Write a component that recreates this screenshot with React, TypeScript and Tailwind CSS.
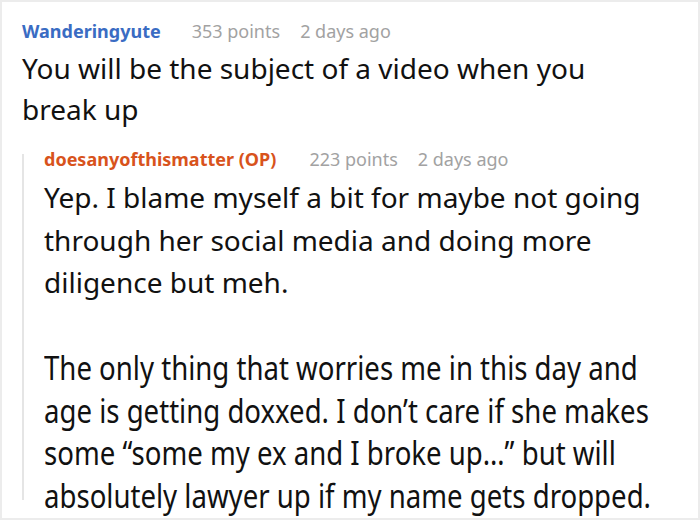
export default function App() {
  const lastPara = [
    'The only thing that worries me in this day and',
    'age is getting doxxed. I don’t care if she makes',
    'some “some my ex and I broke up…” but will',
    'absolutely lawyer up if my name gets dropped.',
  ]

  return (
    <div className="w-[700px] h-[520px] overflow-hidden bg-white border-2 border-[#ececec] font-['Noto_Sans',sans-serif]">
      <div className="pl-[20px] pt-[16px]">
        <div className="flex items-baseline text-[18px] leading-[26px]">
          <span className="font-bold text-[#3a6cc3]">Wanderingyute</span>
          <span className="ml-[31px] text-[#a2a2a2]">353 points</span>
          <span className="ml-[20px] text-[#a2a2a2]">2 days ago</span>
        </div>
        <p className="mt-[4px] text-[28px] leading-[41px] text-[#111] whitespace-nowrap">
          You will be the subject of a video when you
          <br />
          break up
        </p>
        <div className="mt-[16px] flex">
          <div className="mt-[8px] h-[346px] w-[2px] shrink-0 bg-[#e5e5e5]" />
          <div className="pl-[20px]">
            <div className="flex items-baseline text-[18px] leading-[26px]">
              <span className="font-bold text-[#d8531c]">doesanyofthismatter (OP)</span>
              <span className="ml-[33px] text-[#a2a2a2]">223 points</span>
              <span className="ml-[20px] text-[#a2a2a2]">2 days ago</span>
            </div>
            <div className="mt-[4px] text-[28px] leading-[42.5px] text-[#111] whitespace-nowrap">
              <p>
                Yep. I blame myself a bit for maybe not going
                <br />
                through her social media and doing more
                <br />
                diligence but meh.
              </p>
              <div className="mt-[42.5px]">
                {lastPara.map((line) => (
                  <div key={line} className="origin-left scale-x-[0.985] scale-y-[1.2]">
                    {line}
                  </div>
                ))}
              </div>
            </div>
          </div>
        </div>
      </div>
    </div>
  )
}
